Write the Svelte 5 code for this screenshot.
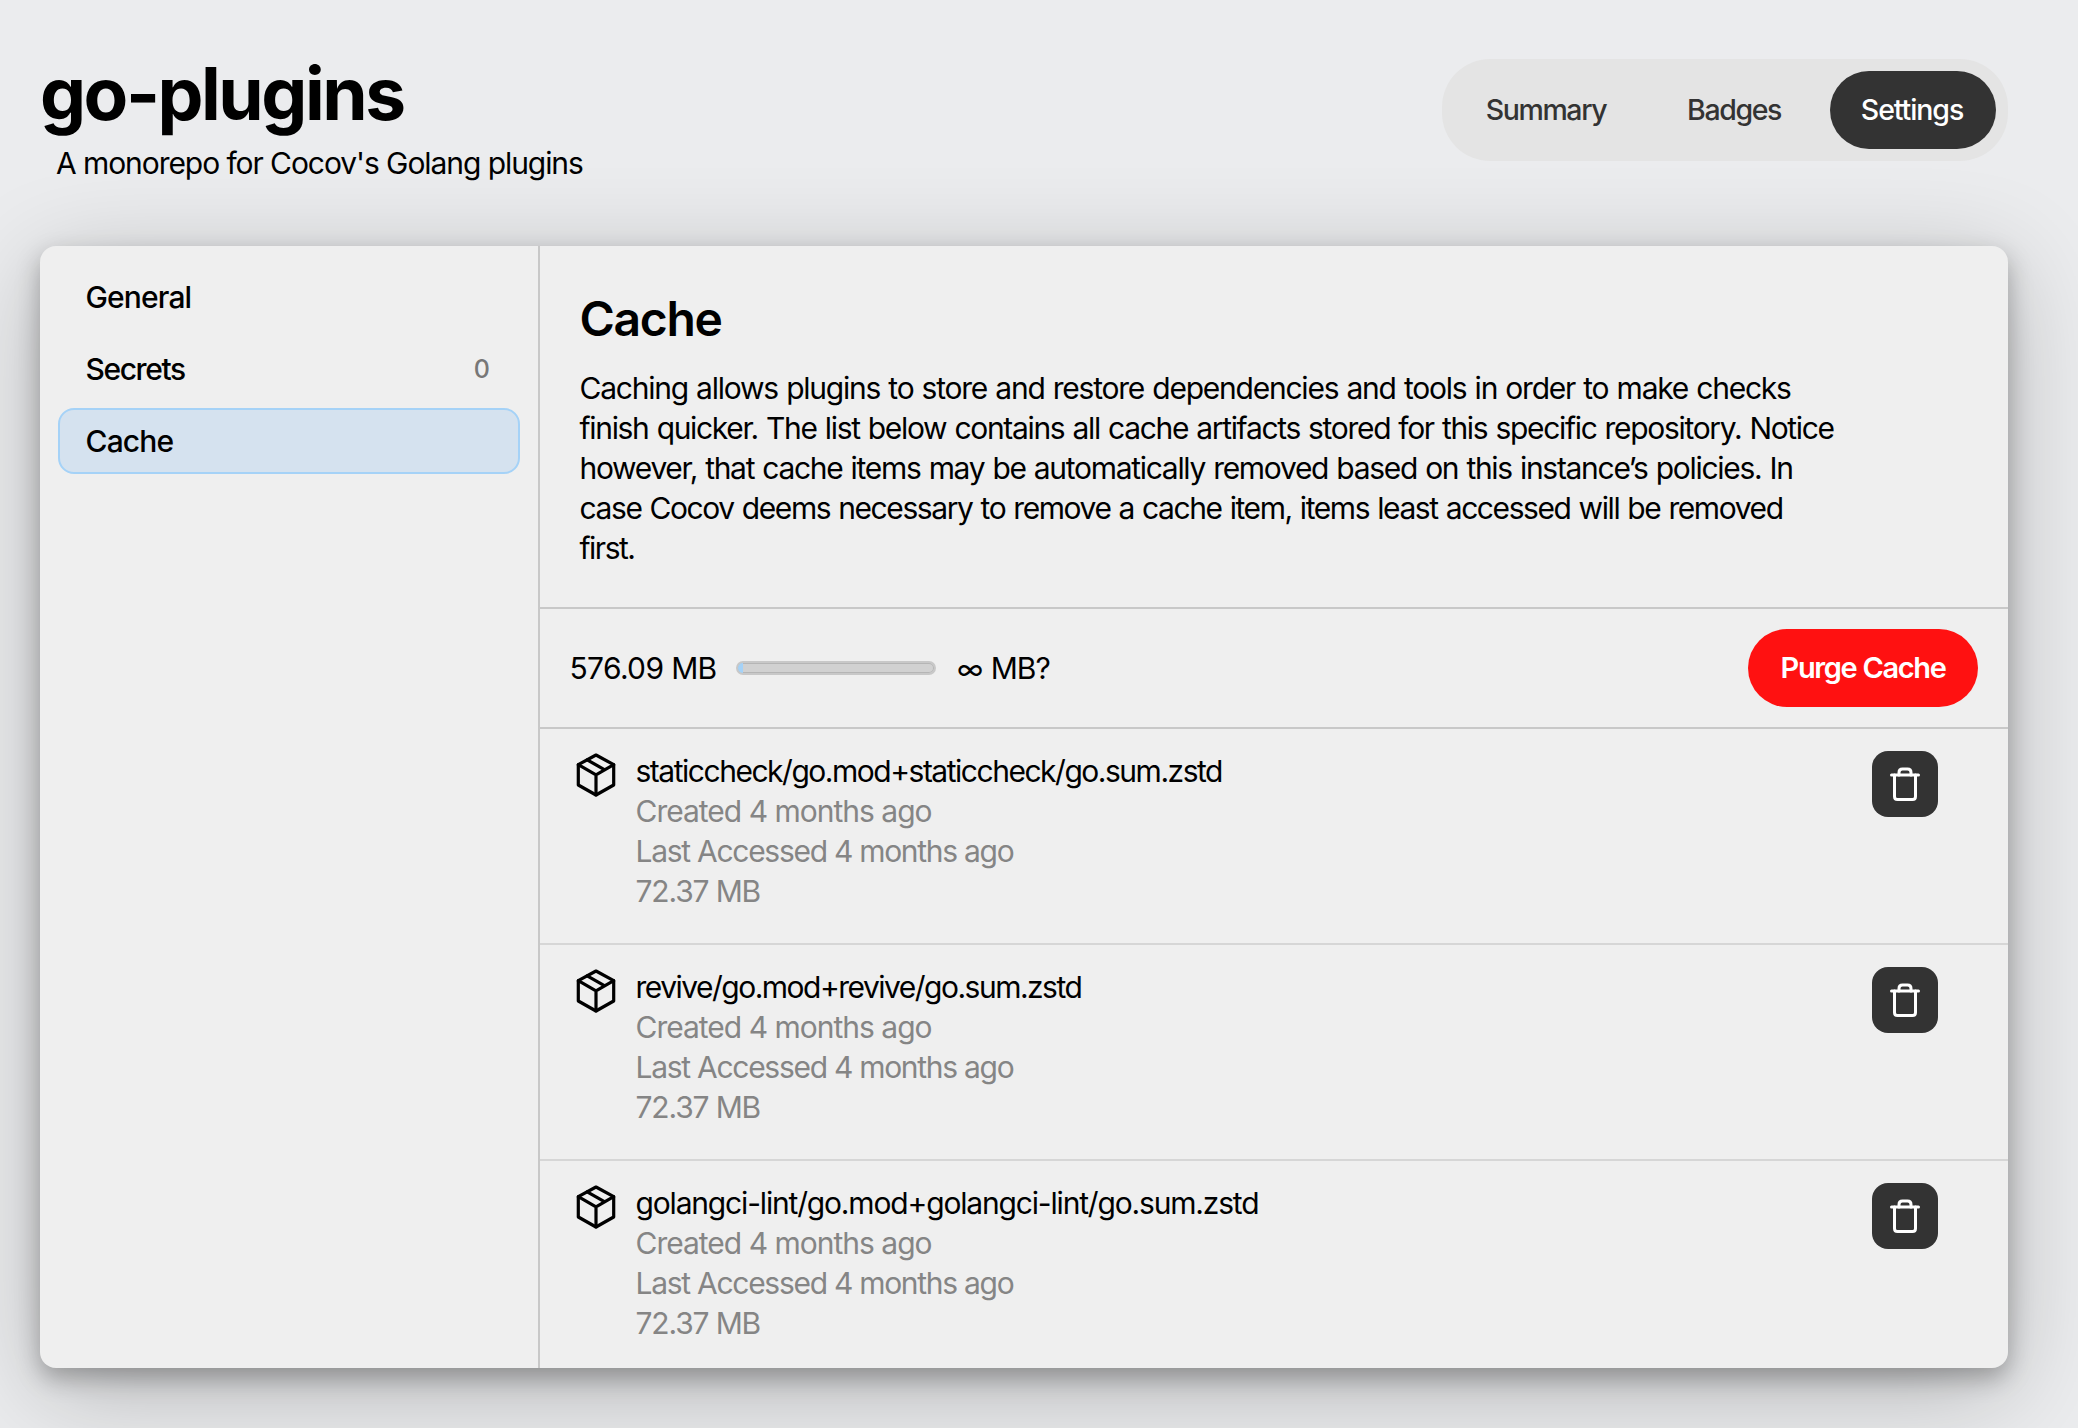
<script>
  const tabs = [
    { label: 'Summary', kind: 'summary' },
    { label: 'Badges', kind: 'badges' },
    { label: 'Settings', kind: 'settings', active: true }
  ];
  const sections = [
    { label: 'General', kind: 'general' },
    { label: 'Secrets', kind: 'secrets', count: 0 },
    { label: 'Cache', kind: 'cache', active: true }
  ];
  const intro = [
    'Caching allows plugins to store and restore dependencies and tools in order to make checks',
    'finish quicker. The list below contains all cache artifacts stored for this specific repository. Notice',
    'however, that cache items may be automatically removed based on this instance’s policies. In',
    'case Cocov deems necessary to remove a cache item, items least accessed will be removed',
    'first.'
  ];
  const artifacts = [
    'staticcheck/go.mod+staticcheck/go.sum.zstd',
    'revive/go.mod+revive/go.sum.zstd',
    'golangci-lint/go.mod+golangci-lint/go.sum.zstd'
  ];
</script>

<div class="page">
  <header>
    <div class="heading">
      <h1>go-plugins</h1>
      <p class="tagline">A monorepo for Cocov's Golang plugins</p>
    </div>
    <nav class="tabs">
      {#each tabs as tab}
        <a class="tab {tab.kind}" class:active={tab.active}><span>{tab.label}</span></a>
      {/each}
    </nav>
  </header>

  <main class="card">
    <aside>
      {#each sections as item}
        <div class="item" class:active={item.active}>
          <span class="label {item.kind}">{item.label}</span>
          {#if item.count !== undefined}<span class="count">{item.count}</span>{/if}
        </div>
      {/each}
    </aside>

    <section class="content">
      <div class="intro">
        <h2>Cache</h2>
        <p>
          {#each intro as line, i}<span class="line l{i}">{line}</span>{/each}
        </p>
      </div>

      <div class="usage">
        <span class="used">576.09 MB</span>
        <div class="meter"><div class="fill"></div></div>
        <span class="limit"><span class="infinity">∞</span> MB?</span>
        <button class="purge">Purge Cache</button>
      </div>

      {#each artifacts as name, i}
        <article>
          <svg class="box" viewBox="0 0 44 48" fill="none" stroke="currentColor" stroke-width="3.2" stroke-linejoin="round" stroke-linecap="round">
            <path d="M22 4 L39.7 13.7 V34 L22 44 L4.3 34 V13.7 Z" />
            <path d="M4.3 13.7 L22 23.8 L39.7 13.7 M22 23.8 V44 M13.2 8.9 L30.8 18.8" />
          </svg>
          <div class="info">
            <span class="name n{i}">{name}</span>
            <span class="created">Created 4 months ago</span>
            <span class="accessed">Last Accessed 4 months ago</span>
            <span class="size">72.37 MB</span>
          </div>
          <button class="trash" aria-label="Delete">
            <svg viewBox="0 0 66 66" fill="none" stroke="currentColor" stroke-width="3" stroke-linecap="round" stroke-linejoin="round">
              <path d="M19.5 24 H46.5" />
              <path d="M22.5 24 V45.5 Q22.5 48.5 25.5 48.5 H40.5 Q43.5 48.5 43.5 45.5 V24" />
              <path d="M27 24 V21.5 Q27 18 30.5 18 H35.5 Q39 18 39 21.5 V24" />
            </svg>
          </button>
        </article>
      {/each}
    </section>
  </main>
</div>

<style>
  :global(body) { background: #ebecee; overflow: hidden; }
  .page {
    box-sizing: border-box;
    width: 2078px;
    height: 1428px;
    padding: 59px 70px 60px 40px;
    display: flex;
    flex-direction: column;
    font: 400 30px/40px Inter, sans-serif;
    color: #000;
    white-space: nowrap;
    overflow: hidden;
  }
  h1, h2, p { margin: 0; }
  header { display: flex; justify-content: space-between; height: 187px; flex: none; }
  h1 { font-size: 73px; line-height: 70px; font-weight: 650; letter-spacing: -2.5px; }
  .tagline { padding-left: 16px; margin-top: 14px; letter-spacing: -1.07px; }
  .tabs {
    box-sizing: border-box;
    width: 566px;
    height: 102px;
    padding: 12px;
    border-radius: 48px;
    background: #e4e4e4;
    display: grid;
    grid-template-columns: 186px 160px 166px;
    justify-content: space-between;
  }
  .tab {
    display: flex;
    align-items: center;
    justify-content: center;
    padding-right: 2px;
    border-radius: 39px;
    font-size: 28.5px;
    font-weight: 550;
    color: #333;
    letter-spacing: -1.4px;
  }
  .tab.active { background: #333; color: #fff; letter-spacing: -1.1px; }

  .card {
    flex: none;
    height: 1122px;
    display: flex;
    border-radius: 16px;
    background: #efefef;
    box-shadow: 0 10px 24px rgba(0, 0, 0, .28), 0 22px 100px rgba(0, 0, 0, .24);
  }
  aside {
    box-sizing: border-box;
    width: 500px;
    padding: 18px;
    border-right: 2px solid #c8c8c8;
    display: flex;
    flex-direction: column;
    gap: 6px;
  }
  .item {
    box-sizing: border-box;
    height: 66px;
    padding: 0 28px 0 25.5px;
    border: 2px solid transparent;
    border-radius: 16px;
    display: flex;
    align-items: center;
    justify-content: space-between;
    font-weight: 500;
  }
  .item.active { background: #d5e2ef; border-color: #a5d2f7; }
  .label { letter-spacing: -.85px; }
  .label.secrets { letter-spacing: -1.4px; }
  .count { font-size: 25px; font-weight: 450; color: #777; }

  .content { flex: 1; min-width: 0; }
  .intro {
    box-sizing: border-box;
    height: 363px;
    padding: 46px 40px 0 39.5px;
    border-bottom: 2px solid #c8c8c8;
  }
  h2 { font-size: 48px; line-height: 54px; font-weight: 600; letter-spacing: -1.3px; }
  .intro p { margin-top: 22px; display: flex; flex-direction: column; align-items: flex-start; }
  .line { word-spacing: 1px; }
  .l0 { letter-spacing: -1.23px; }
  .l1 { letter-spacing: -1.32px; }
  .l2 { letter-spacing: -1.3px; }
  .l3 { letter-spacing: -1.41px; }
  .l4 { letter-spacing: -1.5px; }

  .usage {
    box-sizing: border-box;
    height: 120px;
    padding: 0 30px 0 29.5px;
    border-bottom: 2px solid #c8c8c8;
    display: flex;
    align-items: center;
  }
  .used { width: 166.5px; letter-spacing: -.65px; }
  .meter {
    box-sizing: border-box;
    width: 200px;
    height: 14px;
    border: 2px solid #c8c8c8;
    border-radius: 7px;
    background: #d1d1d1;
    overflow: hidden;
    display: flex;
    box-shadow: inset 0 0 0 1px #b5b5b5;
  }
  .fill { width: 5px; background: #a5d2f7; }
  .limit { margin-left: 21px; letter-spacing: -1px; }
  .infinity { font-size: 28px; margin-right: 1px; }
  .purge {
    margin-left: auto;
    width: 230px;
    height: 78px;
    border: 0;
    border-radius: 39px;
    background: #f11;
    color: #fff;
    font: 600 29px/40px Inter, sans-serif;
    letter-spacing: -1.35px;
    padding: 0;
  }

  article {
    box-sizing: border-box;
    height: 216px;
    padding: 22px 70px 0 34px;
    border-bottom: 2px solid #d6d6d6;
    display: flex;
    align-items: flex-start;
  }
  article:last-child { border: 0; height: 207px; }
  .box { width: 44px; height: 48px; }
  .info { margin-left: 17.5px; display: flex; flex-direction: column; color: #858585; letter-spacing: -1px; }
  .name { color: #000; }
  .n0 { letter-spacing: -1.48px; }
  .n1 { letter-spacing: -1.51px; }
  .n2 { letter-spacing: -1.17px; }
  .accessed { letter-spacing: -1.28px; }
  .size { letter-spacing: -1.15px; }
  .trash {
    margin-left: auto;
    width: 66px;
    height: 66px;
    padding: 0;
    border: 0;
    border-radius: 16px;
    background: #333;
    color: #fff;
  }
  .trash svg { display: block; width: 66px; height: 66px; }
</style>
